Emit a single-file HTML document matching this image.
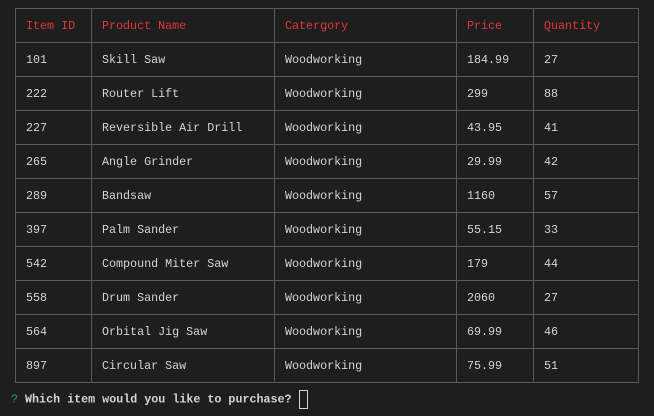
<!DOCTYPE html>
<html><head><style>
html,body{margin:0;padding:0;background:#1e1e1e;width:654px;height:416px;overflow:hidden;font-family:"Liberation Mono",monospace;font-size:11.7px;color:#d4d4d4}
table{position:absolute;left:15px;top:8px;border-collapse:collapse}
td{border:1px solid #5a5a5a;height:34px;padding:0 0 0 10px;box-sizing:border-box;white-space:nowrap}
tr.h td{color:#e0373d}
.p{position:absolute;left:11px;top:390px;font-weight:bold;color:#d4d4d4}
.p .q{color:#23a35a;font-weight:normal}
.c{display:inline-block;width:7px;height:17px;border:1px solid #d4d4d4;vertical-align:middle;margin-left:0px}
</style></head><body>
<table>
<colgroup><col style="width:76px"><col style="width:183px"><col style="width:182px"><col style="width:77px"><col style="width:105px"></colgroup>
<tr class="h"><td>Item ID</td><td>Product Name</td><td>Catergory</td><td>Price</td><td>Quantity</td></tr>
<tr><td>101</td><td>Skill Saw</td><td>Woodworking</td><td>184.99</td><td>27</td></tr>
<tr><td>222</td><td>Router Lift</td><td>Woodworking</td><td>299</td><td>88</td></tr>
<tr><td>227</td><td>Reversible Air Drill</td><td>Woodworking</td><td>43.95</td><td>41</td></tr>
<tr><td>265</td><td>Angle Grinder</td><td>Woodworking</td><td>29.99</td><td>42</td></tr>
<tr><td>289</td><td>Bandsaw</td><td>Woodworking</td><td>1160</td><td>57</td></tr>
<tr><td>397</td><td>Palm Sander</td><td>Woodworking</td><td>55.15</td><td>33</td></tr>
<tr><td>542</td><td>Compound Miter Saw</td><td>Woodworking</td><td>179</td><td>44</td></tr>
<tr><td>558</td><td>Drum Sander</td><td>Woodworking</td><td>2060</td><td>27</td></tr>
<tr><td>564</td><td>Orbital Jig Saw</td><td>Woodworking</td><td>69.99</td><td>46</td></tr>
<tr><td>897</td><td>Circular Saw</td><td>Woodworking</td><td>75.99</td><td>51</td></tr>
</table>
<div class="p"><span class="q">?</span> Which item would you like to purchase? <span class="c"></span></div>
</body></html>
